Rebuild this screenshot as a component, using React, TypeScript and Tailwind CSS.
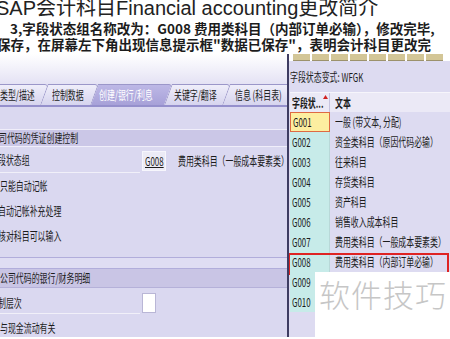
import React from "react";

// squeezed SAP text (the screenshot is compressed horizontally)
const Sq = ({ children, className = "" }: { children: React.ReactNode; className?: string }) => (
  <span className={`inline-block origin-left scale-x-[0.66] whitespace-nowrap ${className}`}>{children}</span>
);

const tabs = [
  { label: "类型/描述", w: "w-[54px]", pl: "pl-[10px]", active: false },
  { label: "控制数据", w: "w-[50px]", pl: "pl-[8px]", active: false },
  { label: "创建/银行/利息", w: "w-[74px]", pl: "pl-[5px]", active: true },
  { label: "关键字/翻译", w: "w-[58px]", pl: "pl-[6px]", active: false },
  { label: "信息 (科目表)", w: "w-[64px]", pl: "pl-[9px]", active: false },
];

const groups = [
  ["G001", "一般 (带文本, 分配)"],
  ["G002", "资金类科目（原因代码必输）"],
  ["G003", "往来科目"],
  ["G004", "存货类科目"],
  ["G005", "资产科目"],
  ["G006", "销售收入成本科目"],
  ["G007", "费用类科目（一般成本要素类）"],
  ["G008", "费用类科目（内部订单必输）"],
  ["G009", ""],
  ["G010", ""],
];

export default function App() {
  return (
    <div className="relative w-[450px] h-[339px] overflow-hidden bg-white font-['Liberation_Sans','Noto_Sans_CJK_SC',sans-serif] text-[#1c1c1c]">
      {/* slide text */}
      <header className="h-[56px]">
        <div className="-mt-[2px] -ml-[4px] text-[20px] leading-[20px] whitespace-nowrap text-[#222]">
          SAP会计科目Financial accounting更改简介
        </div>
        <div className="mt-[2px] pl-[10px] text-[13.5px] leading-[16px] font-bold whitespace-nowrap font-['Noto_Sans_CJK_SC',sans-serif]">
          3,字段状态组名称改为：G008 费用类科目（内部订单必输），修改完毕,
        </div>
        <div className="-ml-[3px] text-[13.5px] leading-[16px] font-bold whitespace-nowrap font-['Noto_Sans_CJK_SC',sans-serif]">
          保存，在屏幕左下角出现信息提示框"数据已保存"，表明会计科目更改完
        </div>
      </header>

      <div className="flex h-[283px] font-['Noto_Sans_CJK_SC',sans-serif] text-[12px]">
        {/* left SAP panel */}
        <div className="w-[287px] shrink-0 flex flex-col bg-[#dad8f0] overflow-hidden">
          <div className="h-[30px] bg-gradient-to-b from-white to-[#e4e2f4]" />
          {/* tabs */}
          <div className="h-[21px] flex -ml-[10px] bg-[#e4e2f4]">
            {tabs.map((t) => (
              <div key={t.label} className={`relative shrink-0 ${t.w} h-full flex items-center ${t.pl}`}>
                <div
                  className={`absolute inset-0 skew-x-[-20deg] rounded-tr-[3px] border-l border-t border-[#9b97c9] ${
                    t.active ? "bg-gradient-to-b from-[#bdb8e6] to-[#a7a1d8]" : "bg-gradient-to-b from-[#efeefa] to-[#d6d4ee]"
                  }`}
                />
                <Sq className={`relative leading-[14px] ${t.active ? "text-white" : "text-[#222]"}`}>{t.label}</Sq>
              </div>
            ))}
          </div>
          <div className="h-[2px] bg-[#9590cc]" />
          <div className="h-[22px]" />
          <div className="h-[18px] flex items-center bg-[#cbc7e7] border-t border-[#f0eefa] border-b border-[#b5b1d9]">
            <Sq className="-ml-[1px]">司代码的凭证创建控制</Sq>
          </div>
          <div className="h-[1px]" />
          <div className="h-[25px] flex items-center">
            <div className="w-[140px] shrink-0 h-full flex items-center border-b border-[#f1f0f9]">
              <Sq className="-ml-[2px]">段状态组</Sq>
            </div>
            <div className="ml-[2px] w-[24px] shrink-0 h-[20px] flex items-center bg-[#ecebf6] border border-[#f6f6fc] overflow-hidden">
              <Sq className="underline ml-[2px]">G008</Sq>
            </div>
            <div className="ml-[12px]">
              <Sq>费用类科目（一般成本要素类）</Sq>
            </div>
          </div>
          <div className="h-[25px] flex items-center">
            <Sq>只能自动记帐</Sq>
          </div>
          <div className="h-[25px] flex items-center">
            <Sq className="-ml-[2px]">自动记帐补充处理</Sq>
          </div>
          <div className="h-[25px] flex items-center">
            <Sq className="-ml-[2px]">核对科目可以输入</Sq>
          </div>
          <div className="h-[9px]" />
          <div className="h-[12px] bg-[#dfddf3] border-t border-[#aaa6d2] border-b border-[#b1addb]" />
          <div className="h-[19px] flex items-center bg-[#c9c5e5] border-b border-[#b5b1d9]">
            <Sq>公司代码的银行/财务明细</Sq>
          </div>
          <div className="h-[30px] flex items-center">
            <div className="w-[140px] shrink-0 h-[22px] flex items-center border-b border-[#f1f0f9]">
              <Sq className="-ml-[2px]">制层次</Sq>
            </div>
            <div className="ml-[2px] w-[14px] shrink-0 h-[20px] bg-white border border-[#b9b6d6]" />
          </div>
          <div className="h-[19px] flex items-center">
            <Sq>与现金流动有关</Sq>
          </div>
        </div>

        {/* popup: field status groups */}
        <div className="flex-1 min-w-0 overflow-hidden flex flex-col border-l-2 border-[#3e3c62] bg-[#dddbf1]">
          <div className="h-[7px] flex gap-[2px] pl-[4px] bg-white">
            {[0, 1, 2, 3, 4, 5, 6, 7].map((i) => (
              <div key={i} className="w-[17px] shrink-0 h-full bg-[#d3c697] border-b border-[#9c926c]" />
            ))}
          </div>
          <div className="h-[31px] flex items-center pl-[1px]">
            <Sq>字段状态变式: WFGK</Sq>
          </div>
          <div className="ml-[1px] flex flex-col">
            <div className="h-[20px] flex bg-[#ebe9f6] border-t border-[#f6f5fb]">
              <div className="relative w-[40px] shrink-0 flex items-center pl-[2px] border-r border-[#c6c3df] overflow-hidden">
                <Sq className="font-bold">字段状...</Sq>
                <svg className="absolute right-[1px] top-[2px]" width="5" height="4" viewBox="0 0 5 4">
                  <polygon points="2.5,0 5,4 0,4" fill="#d02020" />
                </svg>
              </div>
              <div className="flex-1 flex items-center pl-[5px]">
                <Sq className="font-bold">文本</Sq>
              </div>
            </div>
            {groups.map(([code, text]) => (
              <div key={code} className="relative h-[20px] flex">
                <div
                  className={`w-[40px] shrink-0 flex items-center pl-[2px] border-r border-[#b8d8d8] ${
                    code === "G001" ? "bg-[#fdeea0] border border-[#de6a44]" : "bg-[#c7ebe9]"
                  }`}
                >
                  <Sq>{code}</Sq>
                </div>
                <div className="flex-1 min-w-0 flex items-center pl-[5px]">
                  <Sq>{text}</Sq>
                </div>
                {code === "G008" && (
                  <div className="absolute -left-[2px] right-[1px] top-[1px] -bottom-[3px] border-2 border-[#df2323]" />
                )}
              </div>
            ))}
          </div>
        </div>
      </div>

      {/* site watermark */}
      <div className="absolute left-[315px] top-[272px] w-[135px] h-[67px] bg-white flex items-start pl-[4px] pt-[8px]">
        <span className="text-[31px] leading-[34px] font-light tracking-[1px] text-[#c6c6c6] whitespace-nowrap">软件技巧</span>
      </div>
    </div>
  );
}
